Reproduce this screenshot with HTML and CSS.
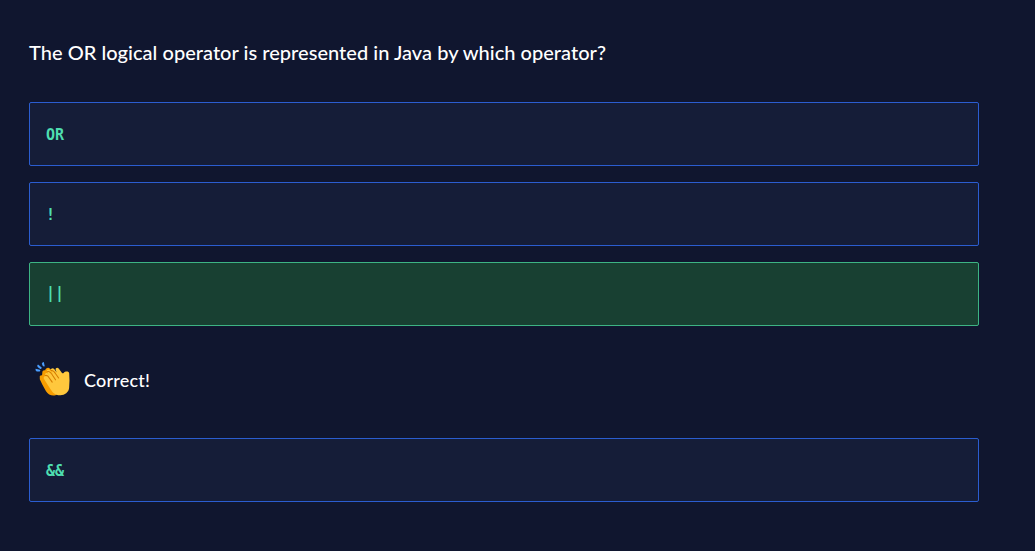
FILE: index.html
```html
<!DOCTYPE html>
<html lang="en">
<head>
<meta charset="utf-8">
<title>Quiz</title>
<link rel="stylesheet" href="styles.css">
</head>
<body>
<main class="quiz">
  <h1 class="question"><span class="question-text">The OR logical operator is represented in Java by which operator?</span></h1>
  <div class="options">
    <div class="option"><code class="code">OR</code></div>
    <div class="option"><code class="code">!</code></div>
    <div class="option option-correct"><code class="code code-bars">||</code></div>
    <div class="feedback">
      <svg class="clap" width="36" height="36" viewBox="0 0 36 36" aria-hidden="true">
        <path fill="#f79d00" d="M4.800 16.600C4.300 14.900 5.800 13.900 7 14.500L7.300 12C7 10.200 8.500 8.700 10.200 9.300C10.600 7 13.400 6 15 7.700L25 16L25 32L20.500 34.300C16.500 35.100 13 33.500 11 30.200L7.300 23.400L4.800 18.300Z"/>
        <path fill="#ffc83d" d="M10.400 14.600C9.300 13 11.300 11.200 12.700 12.600L13.900 14.300L12 10.500C11.500 8.800 13.500 7.700 14.800 9.100L18.100 13.600L15.900 9.300C15.600 7.300 17.900 6.300 19.200 8L21.700 11.400L20.600 8.700C20.300 6.800 22.500 5.900 23.700 7.400L27 11.900C27.400 12.500 28.200 12.500 28.600 11.900C30.200 9.900 34 9.900 34.200 12.400L34.500 19.500L34.100 27C33.700 31.300 29.500 34.400 25 34.200C20.400 34.300 17.600 31.400 15.700 28.400L9.300 18.500C8 16.500 9 14.800 10.400 15.300Z"/>
        <path fill="none" stroke="#d67d00" stroke-width="1.100" stroke-linecap="round" d="M10.300 14.500C12 14 13.500 15.500 14.300 17L17.200 21.100M12.300 10.700C14.500 9.700 16.500 12.500 17.700 14.500L20.500 18.800M16.300 9.500C18.200 9.300 19.700 11.200 20.800 13L23.600 17"/>
        <g fill="#4a9eff">
          <path d="M.6 7.700L4.900 8.700Q5.900 9.900 4.700 10.600L1.700 10.500Q0 9.500 .6 7.700Z"/>
          <path d="M3 3.600L6.700 6.600Q6.800 8.200 5.300 8L2.600 6Q1.700 4.300 3 3.600Z"/>
          <path d="M8.800 1.100L9.700 4.900Q9.100 6 7.800 5L6.900 2.700Q7.100 1.100 8.800 1.100Z"/>
        </g>
      </svg>
      <span class="feedback-text">Correct!</span>
    </div>
    <div class="option"><code class="code">&amp;&amp;</code></div>
  </div>
</main>
</body>
</html>
```
FILE: styles.css
```css
body {
  margin: 0;
  min-height: 551px;
  background: #10162f;
  color: #fff;
  font-family: Lato, "Liberation Sans", sans-serif;
}

.quiz {
  box-sizing: border-box;
  width: 979px;
  padding: 37px 0 0 29px;
}

.question {
  margin: 0 0 35px;
  font-size: 20px;
  font-weight: 500;
  line-height: 30px;
  letter-spacing: 0.03px;
  white-space: nowrap;
}

.options {
  display: flex;
  flex-direction: column;
  gap: 16px;
}

.option {
  box-sizing: border-box;
  display: flex;
  align-items: center;
  height: 64px;
  padding-left: 16px;
  background: #151d38;
  border: 1px solid #2b5dd0;
  border-radius: 2px;
}

.option-correct {
  background: #184032;
  border-color: #3db484;
}

.code {
  padding-top: 2px;
  color: #4edeb0;
  font: bold 15px/24px "DejaVu Sans Mono", monospace;
}

.code-bars {
  padding: 0 0 2px;
}

.feedback {
  display: flex;
  align-items: center;
  gap: 13px;
  height: 80px;
  padding-left: 6px;
}

.clap {
  margin-top: -7px;
}

.feedback-text {
  margin-top: -4px;
  font-size: 18px;
  font-weight: 500;
  line-height: 24px;
  letter-spacing: 0.2px;
}
```
